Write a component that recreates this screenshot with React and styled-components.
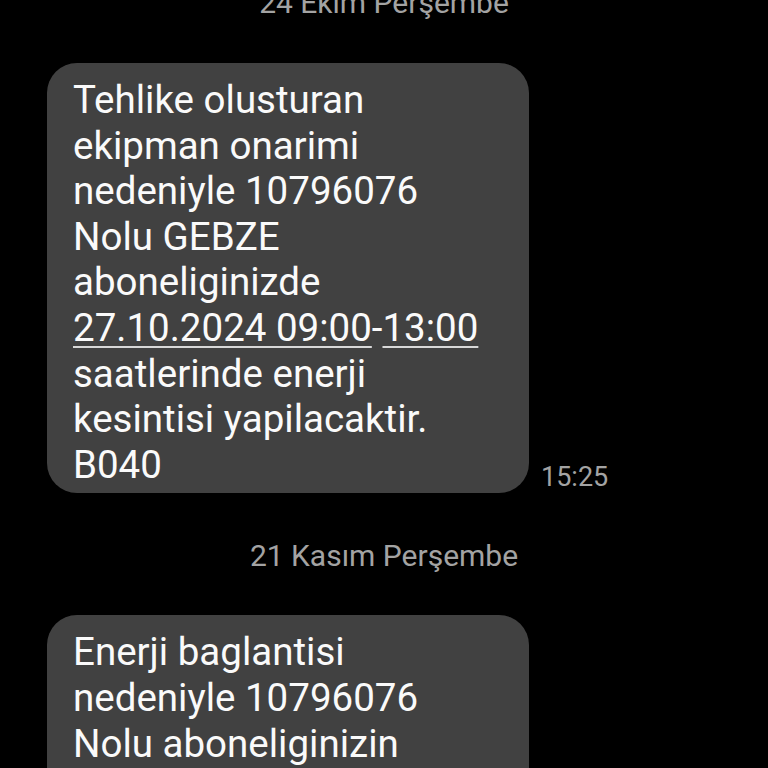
import styled, { createGlobalStyle } from 'styled-components';

const GlobalStyle = createGlobalStyle`
  html, body {
    margin: 0;
    padding: 0;
    background: #000;
  }
  body {
    font-family: Roboto, "Noto Sans", sans-serif;
    -webkit-font-smoothing: antialiased;
  }
`;

const Screen = styled.div`
  width: 768px;
  height: 768px;
  overflow: hidden;
  background: #000;
`;

// the thread is scrolled, so the first date header sits partly above the top edge
const Thread = styled.div`
  display: flex;
  flex-direction: column;
  margin-top: -15px;
  padding: 0 47px;
`;

const DateHeader = styled.div`
  text-align: center;
  color: #a3a3a3;
  font-size: 30px;
  line-height: 36px;
  padding-bottom: ${p => (p.$first ? 42 : 41)}px;
  margin: 0 -47px;
`;

const MessageRow = styled.div`
  display: flex;
  align-items: flex-end;
  gap: 12px;
  margin-bottom: 45px;
`;

const Bubble = styled.div`
  width: 482px;
  box-sizing: border-box;
  background: #414141;
  border-radius: 30px;
  padding: 14px 25px 6px 26px;
  color: #fafafa;
  font-size: 38.5px;
  line-height: 45.6px;
`;

const Line = styled.span`
  display: block;
  white-space: nowrap;
`;

const Link = styled.span`
  text-decoration: underline;
  text-decoration-thickness: 2px;
  text-underline-offset: 5px;
  text-decoration-color: #d8d8d8;
`;

const Time = styled.div`
  color: #a3a3a3;
  font-size: 27px;
  line-height: 30px;
  padding-bottom: 1px;
`;

export default function App() {
  return (
    <Screen>
      <GlobalStyle />
      <Thread>
        <DateHeader $first>24 Ekim Perşembe</DateHeader>
        <MessageRow>
          <Bubble>
            <Line>Tehlike olusturan</Line>
            <Line>ekipman onarimi</Line>
            <Line>nedeniyle 10796076</Line>
            <Line>Nolu GEBZE</Line>
            <Line>aboneliginizde</Line>
            <Line>
              <Link>27.10.2024 09:00</Link>-<Link>13:00</Link>
            </Line>
            <Line>saatlerinde enerji</Line>
            <Line>kesintisi yapilacaktir.</Line>
            <Line>B040</Line>
          </Bubble>
          <Time>15:25</Time>
        </MessageRow>
        <DateHeader>21 Kasım Perşembe</DateHeader>
        <MessageRow>
          <Bubble>
            <Line>Enerji baglantisi</Line>
            <Line>nedeniyle 10796076</Line>
            <Line>Nolu aboneliginizin</Line>
            <Line>enerjisi verilecektir.</Line>
          </Bubble>
        </MessageRow>
      </Thread>
    </Screen>
  );
}
